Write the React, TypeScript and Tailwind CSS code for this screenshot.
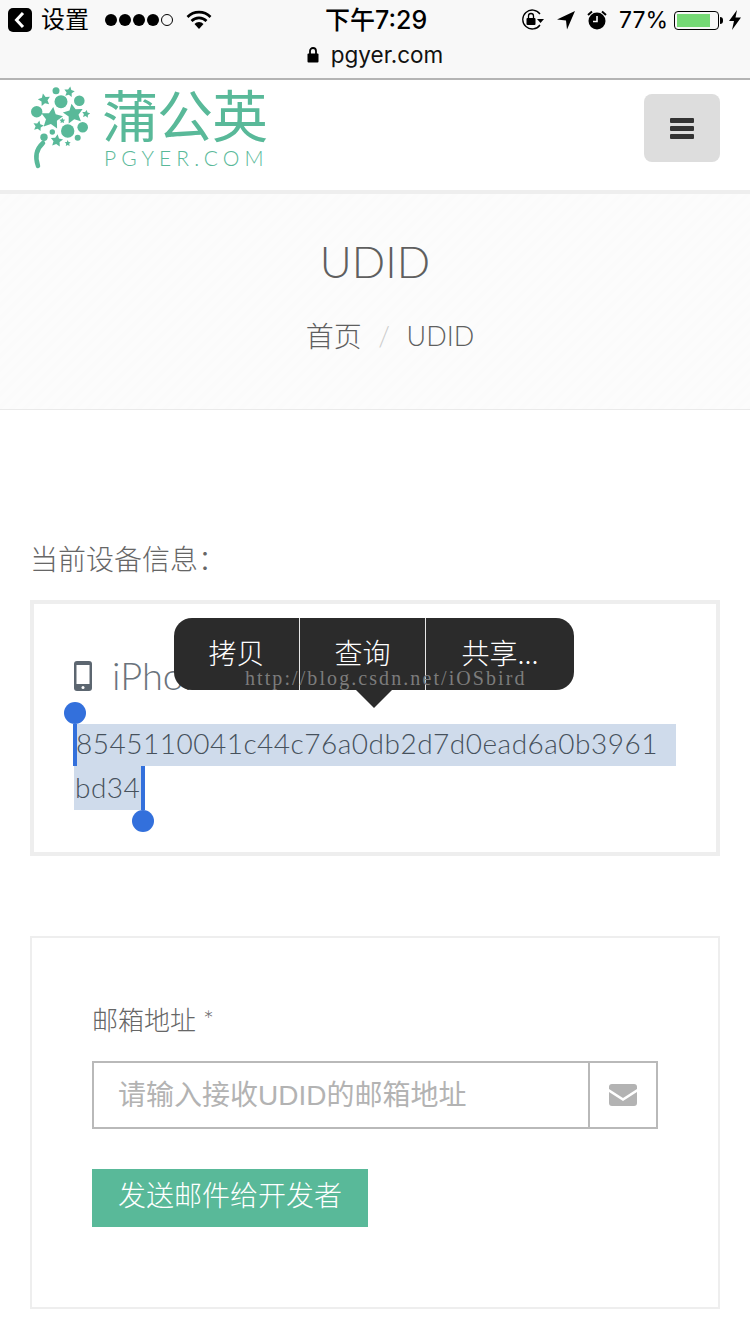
import React from "react";

const CJK = "font-['Lato','Noto_Sans_CJK_SC',sans-serif]";

function star(cx: number, cy: number, r: number, rot = 0) {
  const pts: string[] = [];
  for (let i = 0; i < 10; i++) {
    const rad = i % 2 === 0 ? r : r * 0.5;
    const a = ((-90 + i * 36 + rot) * Math.PI) / 180;
    pts.push(`${(cx + rad * Math.cos(a)).toFixed(1)},${(cy + rad * Math.sin(a)).toFixed(1)}`);
  }
  return pts.join(" ");
}

function LogoMark() {
  const circles = [
    [26, 10.7, 3.5], [31, 21.7, 6.5], [49.3, 20.7, 5.3], [6.7, 31.7, 5.7], [37.7, 51, 6.7],
    [52.7, 47.3, 5.3], [22.3, 52, 2.7], [14, 57.3, 3.7], [47.7, 57.7, 3],
  ];
  const stars = [
    [39.3, 12, 5.5, 10], [14.3, 20, 6.5, -12], [21.7, 38.3, 11.5, 8], [43.3, 34, 10.5, -10], [56, 34, 4.2, 10],
    [8.3, 46, 5.5, 12], [32.3, 40.7, 3, 0], [26.7, 60.7, 6.5, 8], [37.7, 63.3, 3.2, 0],
  ];
  return (
    <svg width="60" height="90" viewBox="0 0 60 90" className="shrink-0">
      {circles.map(([x, y, r], i) => <circle key={i} cx={x} cy={y} r={r} fill="#59b999" />)}
      {stars.map(([x, y, r, o], i) => <polygon key={i} points={star(x, y, r, o)} fill="#59b999" />)}
      <path d="M13 63 Q3 72 8 86" stroke="#59b999" strokeWidth="4.5" strokeLinecap="round" fill="none" />
    </svg>
  );
}

function StatusBar() {
  return (
    <div className="h-[80px] bg-[#f8f8f8] border-b-2 border-[#b4b4b4] font-['Inter','Noto_Sans_CJK_SC',sans-serif] text-black">
      <div className="h-[40px] pl-2 pr-[9px] flex items-center relative">
        <svg width="24" height="24" viewBox="0 0 24 24">
          <rect width="24" height="24" rx="5" fill="#000" />
          <path d="M15 5 L8.5 12 L15 19" stroke="#fff" strokeWidth="3" fill="none" />
        </svg>
        <span className="ml-[9px] text-[24px] leading-none">设置</span>
        <div className="ml-[16px] flex items-center gap-[2px]">
          {[0, 1, 2, 3].map((i) => <span key={i} className="w-[12px] h-[12px] rounded-full bg-black" />)}
          <span className="w-[12px] h-[12px] rounded-full border border-black" />
        </div>
        <svg width="26" height="20" viewBox="0 0 26 20" className="ml-[13px]">
          <path d="M1.5 7 A16 16 0 0 1 24.5 7" stroke="#000" strokeWidth="2.6" fill="none" />
          <path d="M5.5 11 A10.5 10.5 0 0 1 20.5 11" stroke="#000" strokeWidth="2.6" fill="none" />
          <path d="M8.5 14 L13 19 L17.5 14 A6 6 0 0 0 8.5 14 Z" fill="#000" />
        </svg>
        <span className="ml-[113px] w-[104px] text-[25px] font-medium leading-none whitespace-nowrap">下午7:29</span>
        <div className="ml-auto flex items-center">
          <svg width="24" height="22" viewBox="0 0 24 22">
            <path d="M20 5 A9.5 9.5 0 1 0 20 16" stroke="#000" strokeWidth="1.3" fill="none" />
            <path d="M17 10 L24 10 L20.5 14 Z" fill="#000" />
            <rect x="6.5" y="9" width="9" height="7" rx="1" fill="#000" />
            <path d="M8.5 9 V7 A2.5 2.5 0 0 1 13.5 7 V9" stroke="#000" strokeWidth="1.3" fill="none" />
          </svg>
          <svg width="20" height="20" viewBox="0 0 20 20" className="ml-[12px]">
            <path d="M19 1 L1 9.5 L10 10.5 L11 19.5 Z" fill="#000" />
          </svg>
          <svg width="20" height="20" viewBox="0 0 20 20" className="ml-[11px]">
            <circle cx="10" cy="11" r="8.5" fill="#000" />
            <path d="M10 6 V11.5 H6" stroke="#f8f8f8" strokeWidth="1.6" fill="none" />
            <path d="M1 5 L5 1.5 M19 5 L15 1.5" stroke="#000" strokeWidth="2" />
          </svg>
          <span className="ml-[12px] text-[23px] leading-none">77%</span>
          <div className="ml-[6px] w-[45px] h-[19px] rounded-[4px] border border-black p-[2px]">
            <div className="w-[33px] h-full bg-[#75d975]" />
          </div>
          <div className="ml-px w-[3px] h-[7px] bg-black rounded-r-full" />
          <svg width="12" height="20" viewBox="0 0 12 20" className="ml-[6px]">
            <path d="M8 0 L0 11 L5 11 L3 20 L12 7.5 L6.5 7.5 Z" fill="#000" />
          </svg>
        </div>
      </div>
      <div className="h-[32px] flex items-center justify-center gap-[12px] -mt-px">
        <svg width="12" height="16" viewBox="0 0 12 16">
          <rect x="0.5" y="6.5" width="11" height="9" rx="1" fill="#000" />
          <path d="M3 7 V4 A3 3 0 0 1 9 4 V7" stroke="#000" strokeWidth="1.8" fill="none" />
        </svg>
        <span className="text-[22.5px] leading-none text-[#111]">pgyer.com</span>
      </div>
    </div>
  );
}

function Header() {
  return (
    <div className="h-[114px] bg-white border-b-4 border-[#eeeeee] pl-[30px] pr-[30px] flex items-start justify-between">
      <div className="flex items-start">
        <LogoMark />
        <div className="ml-[12px] flex flex-col items-start">
          <span className="text-[#59b999] text-[56px] leading-[70px] h-[70px] tracking-[-1px] font-['Noto_Sans_CJK_SC',sans-serif] font-normal whitespace-nowrap -mt-[2px]">蒲公英</span>
          <span className="text-[#59b999] text-[21px] leading-none tracking-[5.1px] font-['Lato',sans-serif] font-light whitespace-nowrap ml-[2px] -mt-[1px]">PGYER.COM</span>
        </div>
      </div>
      <div className="mt-[14px] w-[76px] h-[68px] rounded-[8px] bg-[#dddddd] flex flex-col items-center justify-center gap-[3px]">
        <span className="w-[24px] h-[5px] rounded-[1px] bg-[#333333]" />
        <span className="w-[24px] h-[5px] rounded-[1px] bg-[#333333]" />
        <span className="w-[24px] h-[5px] rounded-[1px] bg-[#333333]" />
      </div>
    </div>
  );
}

function TitleBand() {
  return (
    <div className={`h-[216px] border-b border-[#eaeaea] bg-[repeating-linear-gradient(135deg,#fcfcfc_0px,#fcfcfc_5px,#fbfbfb_5px,#fbfbfb_9px)] flex flex-col items-center text-[#5f5f5f] ${CJK}`}>
      <h1 className="mt-[37px] text-[44px] leading-[60px] font-light">UDID</h1>
      <div className="mt-[25px] ml-[30px] flex items-center text-[27px] leading-[40px]">
        <span className="text-[28px] font-light">首页</span>
        <span className="mx-[16.5px] text-[#cccccc] font-light">/</span>
        <span className="font-light">UDID</span>
      </div>
    </div>
  );
}

function SelectionMenu() {
  return (
    <div className="absolute left-[140px] top-[14px] w-[400px] h-[72px] rounded-[18px] bg-[#2b2b2b] flex text-white text-[28px] font-['Noto_Sans_CJK_SC',sans-serif] font-light">
      <div className="w-[125px] pb-[4px] flex items-center justify-center">拷贝</div>
      <div className="w-[126px] pb-[4px] border-l-[1.5px] border-[#e8e8e8] flex items-center justify-center">查询</div>
      <div className="flex-1 pb-[4px] border-l-[1.5px] border-[#e8e8e8] flex items-center justify-center whitespace-nowrap">共享...</div>
      <div className="absolute left-[182px] top-[72px] w-0 h-0 border-x-[18px] border-t-[18px] border-x-transparent border-t-[#2b2b2b]" />
      <span className="absolute left-[71px] top-[49px] text-[20px] leading-[22px] tracking-[2.08px] text-[#7c7c7c] font-['Liberation_Serif',serif] font-normal whitespace-nowrap">http://blog.csdn.net/iOSbird</span>
    </div>
  );
}

function DeviceCard() {
  return (
    <div className={`relative h-[256px] border-4 border-[#eeeeee] pl-[40px] text-[#5c6670] ${CJK}`}>
      <div className="h-[120px] pt-[50px] flex items-start">
        <svg width="18" height="30" viewBox="0 0 18 30" className="mt-[7px] shrink-0">
          <rect width="18" height="30" rx="3" fill="#5c6670" />
          <rect x="2.5" y="4" width="13" height="19" fill="#fff" />
          <circle cx="9" cy="26.5" r="1.5" fill="#fff" />
        </svg>
        <span className="ml-[20px] text-[38px] leading-[42px] font-light text-[#6a737c] whitespace-nowrap">iPhone 7</span>
      </div>
      <div className="text-[28px] font-light text-[#46515c]">
        <div className="w-[602px] h-[42px] bg-[#cfdbeb] pl-[2px] leading-[38px] tracking-[0.5px] whitespace-nowrap">8545110041c44c76a0db2d7d0ead6a0b3961</div>
        <div className="w-[69px] h-[44px] bg-[#cfdbeb] pl-[1px] leading-[42px] tracking-[0.5px] whitespace-nowrap">bd34</div>
      </div>
      <span className="absolute left-[39px] top-[120px] w-[4px] h-[42px] bg-[#3370dc]" />
      <span className="absolute left-[30px] top-[98px] w-[22px] h-[22px] rounded-full bg-[#3370dc]" />
      <span className="absolute left-[107px] top-[162px] w-[4px] h-[44px] bg-[#3370dc]" />
      <span className="absolute left-[98px] top-[206px] w-[22px] h-[22px] rounded-full bg-[#3370dc]" />
      <SelectionMenu />
    </div>
  );
}

function MailForm() {
  return (
    <div className={`mt-[80px] h-[373px] border-2 border-[#eeeeee] pl-[60px] pt-[62px] ${CJK}`}>
      <div className="text-[26px] leading-[40px] text-[#666666] font-light">邮箱地址 *</div>
      <div className="mt-[21px] w-[566px] h-[68px] border-2 border-[#b9b9b9] flex">
        <div className="flex-1 pl-[24px] pt-[2px] flex items-center text-[28px] font-['Liberation_Sans','Noto_Sans_CJK_SC',sans-serif] text-[#b3b3b3] whitespace-nowrap">请输入接收UDID的邮箱地址</div>
        <div className="w-[68px] border-l-2 border-[#b9b9b9] flex items-center justify-center">
          <svg width="28" height="22" viewBox="0 0 28 22">
            <path d="M3 0 H25 A3 3 0 0 1 28 3 V5 L14 14 L0 5 V3 A3 3 0 0 1 3 0 Z" fill="#b3b3b3" />
            <path d="M0 8 L14 17 L28 8 V19 A3 3 0 0 1 25 22 H3 A3 3 0 0 1 0 19 Z" fill="#b3b3b3" />
          </svg>
        </div>
      </div>
      <div className="mt-[40px] w-[276px] h-[58px] pb-[6px] bg-[#59b999] flex items-center justify-center text-white text-[28px] font-light whitespace-nowrap">发送邮件给开发者</div>
    </div>
  );
}

export default function App() {
  return (
    <div className="w-[750px] h-[1334px] bg-white overflow-hidden">
      <StatusBar />
      <Header />
      <TitleBand />
      <div className="px-[30px]">
        <div className={`mt-[127px] h-[63px] text-[28px] leading-[44px] text-[#666666] font-light ${CJK}`}>当前设备信息：</div>
        <DeviceCard />
        <MailForm />
      </div>
    </div>
  );
}
